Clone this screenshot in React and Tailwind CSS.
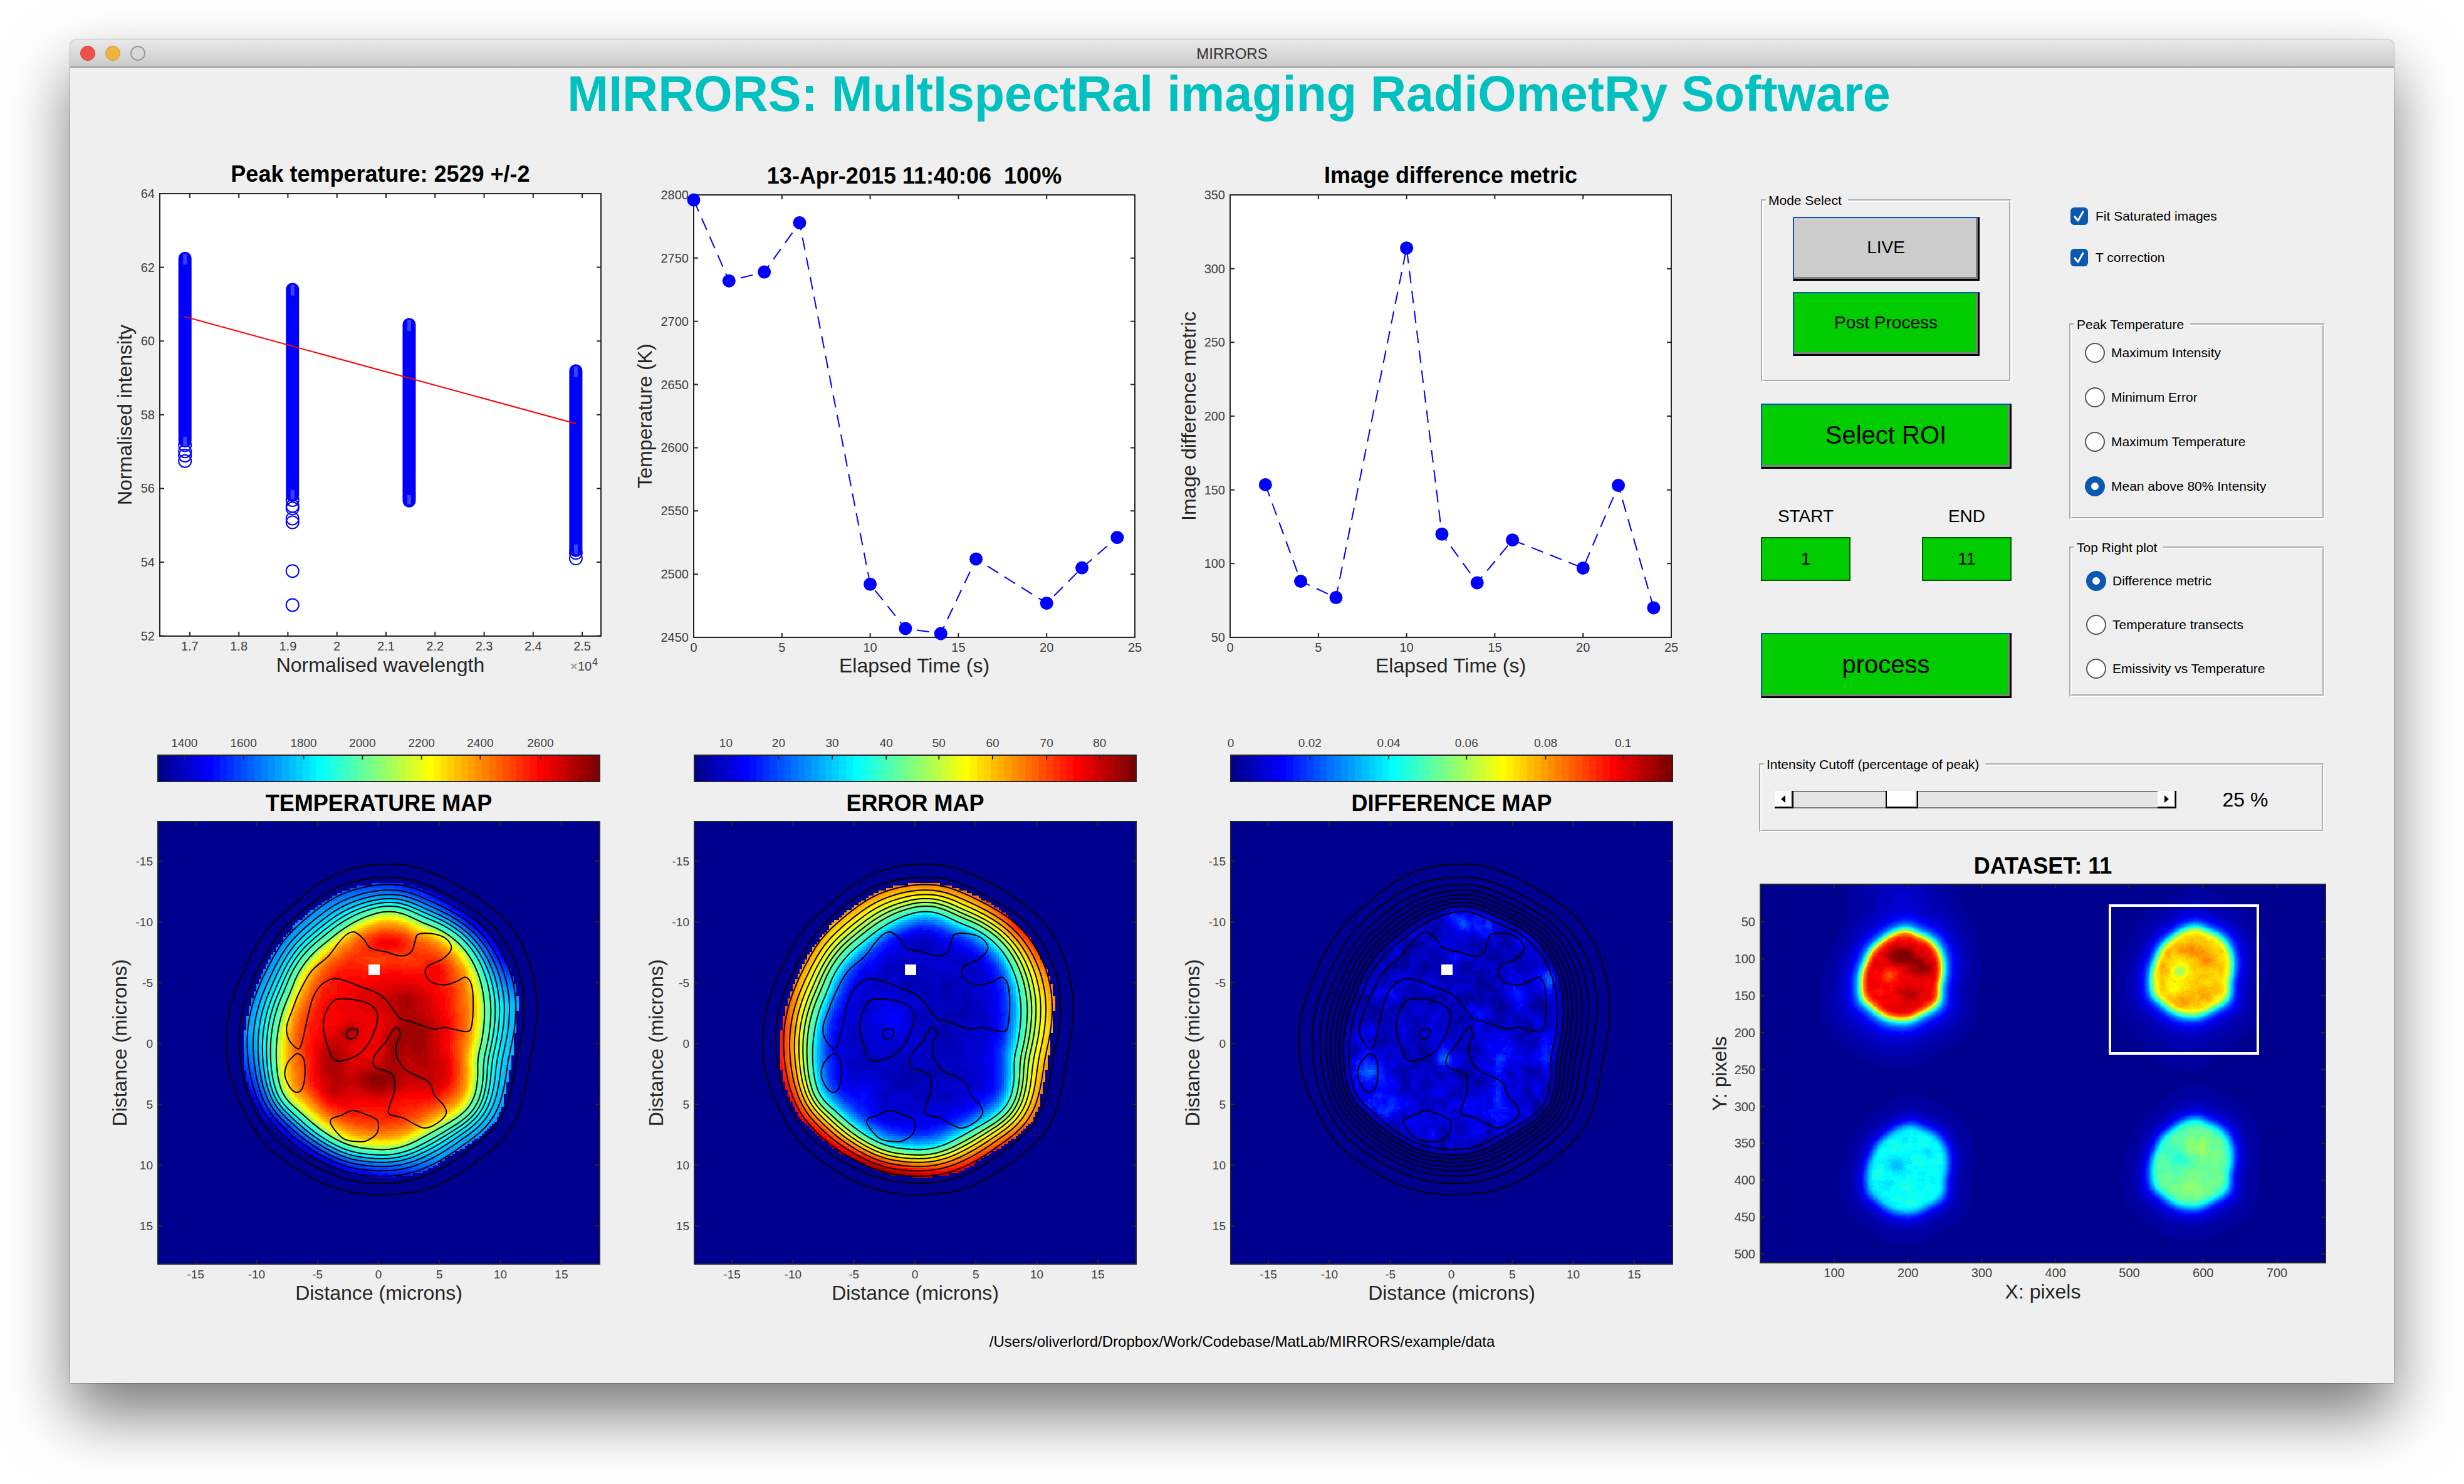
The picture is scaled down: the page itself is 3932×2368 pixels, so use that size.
import React, { useMemo } from "react";

const clamp = (v, a = 0, b = 1) => Math.min(b, Math.max(a, v));
const jet = (i) => {
  const v = (i + 1) / 64;
  const c = (o) => Math.round(255 * clamp(1.5 - Math.abs(4 * v - o)));
  return `rgb(${c(3)},${c(2)},${c(1)})`;
};
const JET = Array.from({ length: 64 }, (_, i) => jet(i));

/* Digitised outlines of the hot spot, in a 1568 unit frame */
const U = 0.5421;
const V = 0.6059;
const toMap = ([u, v]) => [(u - 189) * U, (v - 265) * V];
const RAW_OUTER = [[880,377],[950,384],[1000,402],[1100,448],[1160,484],[1220,530],[1262,590],[1290,660],[1304,740],[1300,810],[1280,900],[1272,960],[1258,1010],[1240,1060],[1205,1100],[1150,1145],[1085,1185],[1020,1220],[950,1240],[880,1246],[800,1246],[730,1235],[660,1212],[600,1180],[540,1143],[490,1100],[450,1040],[415,970],[397,920],[390,860],[393,800],[410,730],[440,665],[480,590],[520,540],[590,485],[640,442],[700,410],[760,388],[820,379]];
const RAW_SECOND = [[880,412],[940,418],[1000,440],[1080,478],[1140,510],[1195,560],[1235,620],[1258,680],[1267,740],[1262,810],[1245,880],[1235,940],[1220,1000],[1200,1045],[1160,1090],[1100,1130],[1040,1170],[980,1197],[920,1213],[860,1217],[790,1215],[720,1200],[650,1172],[590,1140],[530,1095],[490,1050],[455,985],[435,910],[429,860],[431,800],[445,740],[470,680],[505,620],[545,560],[590,520],[650,475],[710,440],[780,420],[830,413]];
const RAW_MASK = [[880,427],[950,437],[1050,475],[1120,520],[1175,570],[1215,635],[1240,690],[1250,735],[1240,800],[1230,890],[1215,960],[1200,1030],[1160,1080],[1090,1120],[1030,1155],[980,1185],[900,1200],[800,1197],[740,1190],[680,1165],[600,1125],[540,1080],[490,1035],[460,970],[443,910],[445,820],[465,740],[500,660],[550,585],[600,530],[660,490],[730,450],[800,432]];
const RAW_INNER = [[870,500],[920,510],[960,530],[1030,555],[1080,590],[1110,625],[1135,675],[1148,730],[1148,800],[1140,850],[1128,890],[1128,960],[1115,1005],[1085,1035],[1030,1065],[980,1090],[920,1118],[870,1129],[820,1127],[760,1120],[710,1100],[660,1070],[610,1030],[560,990],[545,950],[538,890],[541,830],[555,770],[580,715],[605,660],[640,618],[690,580],[740,545],[790,520],[830,507]];
const RAW_ISLANDS = [
  [[768,556],[795,575],[815,598],[860,608],[905,619],[935,608],[946,580],[955,562],[995,560],[1035,572],[1053,598],[1030,625],[985,645],[976,665],[995,688],[1035,695],[1070,685],[1095,675],[1112,695],[1117,740],[1113,800],[1100,818],[1060,812],[1035,807],[1000,811],[960,800],[930,790],[905,785],[885,765],[860,735],[830,715],[780,698],[740,684],[705,679],[670,695],[645,730],[630,780],[612,850],[600,863],[575,840],[568,805],[585,760],[605,715],[640,660],[690,620],[720,585],[745,562]],
  [[600,876],[618,890],[622,930],[615,965],[600,978],[580,968],[563,935],[568,905],[585,885]],
  [[720,732],[790,738],[825,755],[836,780],[825,820],[800,860],[770,883],[715,895],[690,860],[676,800],[690,755]],
  [[755,811],[775,813],[775,828],[760,837],[747,834],[744,822]],
  [[888,807],[903,825],[892,850],[893,885],[920,920],[985,950],[1003,985],[1030,1012],[1037,1035],[1010,1060],[975,1072],[945,1062],[910,1045],[870,1035],[872,1010],[885,975],[882,935],[860,922],[826,910],[828,880],[860,845]],
  [[762,1026],[800,1036],[835,1052],[834,1085],[805,1105],[780,1108],[735,1100],[700,1065],[700,1048],[730,1038]],
];

const CENTER = toMap([845, 815]);
const N = 360;
const polar = (raw) => {
  const pts = raw
    .map(toMap)
    .map(([x, y]) => [Math.atan2(y - CENTER[1], x - CENTER[0]), Math.hypot(x - CENTER[0], y - CENTER[1])])
    .sort((a, b) => a[0] - b[0]);
  const ext = [
    [pts[pts.length - 1][0] - 2 * Math.PI, pts[pts.length - 1][1]],
    ...pts,
    [pts[0][0] + 2 * Math.PI, pts[0][1]],
  ];
  const base = Array.from({ length: N }, (_, k) => {
    const a = -Math.PI + (k * 2 * Math.PI) / N;
    let j = 0;
    while (j < ext.length - 2 && ext[j + 1][0] < a) j += 1;
    const t = (a - ext[j][0]) / (ext[j + 1][0] - ext[j][0]);
    return ext[j][1] + t * (ext[j + 1][1] - ext[j][1]);
  });
  return base.map((_, k) => {
    let s = 0;
    for (let d = -5; d <= 5; d += 1) s += base[(k + d + N) % N];
    return s / 11;
  });
};
const OUTER = polar(RAW_OUTER);
const SECOND = polar(RAW_SECOND);
const MASK = polar(RAW_MASK);
const INNER = polar(RAW_INNER);
const at = (arr, a) => {
  const f = ((a + Math.PI) / (2 * Math.PI)) * N;
  const i = Math.floor(f);
  const t = f - i;
  return arr[((i % N) + N) % N] * (1 - t) + arr[(i + 1) % N] * t;
};
const ringPath = (arr) =>
  arr
    .map((r, k) => {
      const a = -Math.PI + (k * 2 * Math.PI) / N;
      return `${k ? "L" : "M"}${(CENTER[0] + r * Math.cos(a)).toFixed(1)} ${(CENTER[1] + r * Math.sin(a)).toFixed(1)}`;
    })
    .join("") + "Z";
const smoothPath = (raw) => {
  const p = raw.map(toMap);
  const n = p.length;
  let d = `M${p[0][0].toFixed(1)} ${p[0][1].toFixed(1)}`;
  for (let i = 0; i < n; i += 1) {
    const [a, b, c, e] = [p[(i - 1 + n) % n], p[i], p[(i + 1) % n], p[(i + 2) % n]];
    const q = [b[0] + (c[0] - a[0]) / 6, b[1] + (c[1] - a[1]) / 6, c[0] - (e[0] - b[0]) / 6, c[1] - (e[1] - b[1]) / 6, c[0], c[1]];
    d += `C${q.map((z) => z.toFixed(1)).join(" ")}`;
  }
  return `${d}Z`;
};
const CONTOURS = [
  ringPath(OUTER),
  ringPath(SECOND),
  ...[0.21, 0.37, 0.5, 0.62, 0.73, 0.84, 1].map((t) => ringPath(SECOND.map((r, k) => r + (INNER[k] - r) * t))),
  ...RAW_ISLANDS.map(smoothPath),
].join("");

/* Smooth deterministic noise */
const hash = (x, y) => {
  let h = Math.imul(x, 374761393) + Math.imul(y, 668265263);
  h = Math.imul(h ^ (h >>> 13), 1274126177);
  return ((h ^ (h >>> 16)) >>> 0) / 4294967295;
};
const noise = (x, y) => {
  const [i, j] = [Math.floor(x), Math.floor(y)];
  const [fx, fy] = [x - i, y - j];
  const [sx, sy] = [fx * fx * (3 - 2 * fx), fy * fy * (3 - 2 * fy)];
  const top = hash(i, j) * (1 - sx) + hash(i + 1, j) * sx;
  const bottom = hash(i, j + 1) * (1 - sx) + hash(i + 1, j + 1) * sx;
  return top * (1 - sy) + bottom * sy;
};
const lerpTable = (table, x) => {
  if (x <= table[0][0]) return table[0][1];
  for (let i = 1; i < table.length; i += 1) {
    if (x <= table[i][0]) {
      const [a, b] = [table[i - 1], table[i]];
      return a[1] + ((x - a[0]) / (b[0] - a[0])) * (b[1] - a[1]);
    }
  }
  return table[table.length - 1][1];
};
const blobs = (list, u, v) =>
  list.reduce((s, [cu, cv, su, sv, amp]) => s + amp * Math.exp(-(((u - cu) / su) ** 2) - ((v - cv) / sv) ** 2), 0);

/* Run-length encode a scalar field into one path for each colour level */
const rasterise = (cols, rows, field) => {
  const parts = Array.from({ length: 64 }, () => []);
  for (let j = 0; j < rows; j += 1) {
    let start = 0;
    let prev = -1;
    for (let i = 0; i <= cols; i += 1) {
      const level = i < cols ? clamp(Math.floor(field(i, j) * 64), 0, 63) : -2;
      if (level !== prev) {
        if (prev > 0) parts[prev].push(`M${start} ${j}h${i - start}v1h${start - i}z`);
        start = i;
        prev = level;
      }
    }
  }
  return parts.map((p) => p.join(""));
};

/* angle in degrees (clockwise from the right) -> value on the rim */
const TEMP_EDGE = [[-180,0.27],[-150,0.25],[-120,0.25],[-95,0.18],[-75,0.13],[-50,0.07],[-30,0.11],[-12,0.28],[10,0.3],[40,0.27],[65,0.25],[80,0.14],[110,0.07],[140,0.07],[160,0.15],[180,0.27]];
const ERR_EDGE = [[-180,0.84],[-160,0.74],[-130,0.7],[-90,0.75],[-65,0.76],[-45,0.86],[-25,0.76],[0,0.68],[30,0.74],[60,0.84],[85,0.94],[105,1],[130,0.9],[160,0.86],[180,0.84]];
const TEMP_BLOBS = [[870,575,60,30,0.06],[870,628,110,30,-0.05],[930,820,70,70,0.08],[830,950,70,40,0.11],[700,890,60,60,0.08],[755,820,30,25,0.07],[1010,655,40,30,0.03],[920,730,80,40,0.06],[600,915,40,60,-0.05],[1085,730,40,90,-0.04],[990,920,90,70,0.07],[760,740,70,50,0.03],[700,985,50,50,0.07],[880,880,30,60,0.05],[1000,810,60,60,0.03]];
const ERR_BLOBS = [[770,790,60,60,0.07],[840,570,80,30,-0.04],[690,980,30,40,0.04],[590,920,30,50,0.04],[1030,640,50,40,-0.02]];
const DIFF_BLOBS = [[900,530,70,40,0.12],[1135,680,30,40,0.13],[1070,575,40,30,0.07],[655,715,35,25,0.09],[600,920,40,50,0.13],[630,1010,50,35,0.11],[820,885,30,35,0.15],[985,885,45,40,0.09],[1115,860,35,45,0.1],[590,820,30,30,0.07],[780,1060,60,30,0.06],[1000,1050,60,40,0.05],[925,770,40,20,0.06],[970,980,30,50,0.07],[900,1010,60,30,0.05],[1040,720,40,30,0.06],[850,620,40,15,0.05],[700,1000,50,60,0.04]];

const CELLS = 180;
const mapField = (kind) => (i, j) => {
  const x = ((i + 0.5) / CELLS) * 705;
  const y = ((j + 0.5) / CELLS) * 706;
  const a = Math.atan2(y - CENTER[1], x - CENTER[0]);
  const r = Math.hypot(x - CENTER[0], y - CENTER[1]);
  const m = at(MASK, a);
  if (r > m) return 0;
  const n = at(INNER, a);
  const deg = (a * 180) / Math.PI;
  const u = x / U + 189;
  const v = y / V + 265;
  const s = (m - r) / (m - n);
  const inside = clamp((n - r) / 60);
  if (kind === "temp") {
    const e = lerpTable(TEMP_EDGE, deg);
    const low = e + (0.48 - e) * clamp(s) ** 1.35;
    const d = Math.max(0, n - r);
    const rise = lerpTable([[0, 0],[8, 0.12],[18, 0.22],[32, 0.3],[50, 0.36],[90, 0.385],[140, 0.39]], d);
    return low + rise + inside * (blobs(TEMP_BLOBS, u, v) + 0.02 * (noise(u / 40, v / 40) - 0.5));
  }
  if (kind === "error") {
    const e = lerpTable(ERR_EDGE, deg);
    const low = e + (0.4 - e) * clamp(s) ** 1.2;
    const d = Math.max(0, n - r);
    const drop = lerpTable([[0, 0],[10, 0.12],[24, 0.24],[40, 0.3],[60, 0.33],[110, 0.35]], d);
    return Math.max(0.02, low - drop + inside * (blobs(ERR_BLOBS, u, v) + 0.03 * (noise(u / 30, v / 30) - 0.5)));
  }
  const fade = clamp((n - r + 14) / 16);
  const grain = 0.08 * noise(u / 28, v / 28) + 0.05 * noise(u / 12 + 50, v / 12) + 0.02 * hash(i, j);
  return fade * clamp(grain - 0.02 + blobs(DIFF_BLOBS, u, v), 0.01, 0.26);
};

const SPOTS = [
  { c: [499, 640], amp: 0.88, list: [[500,588,35,25,0.12],[545,620,25,25,0.1],[470,640,18,20,-0.1],[520,690,25,20,0.06],[500,540,40,20,-0.02],[440,690,30,40,-0.02]] },
  { c: [1190, 630], amp: 0.66, list: [[1190,573,35,18,0.08],[1228,600,20,20,0.07],[1163,630,18,18,-0.14],[1120,600,20,40,0.03],[1215,690,20,20,0.05],[1165,715,25,20,0.05],[1145,670,15,20,-0.05]] },
  { c: [512, 1168], amp: 0.375, list: [[488,1160,20,25,-0.08],[515,1085,20,15,-0.03],[560,1115,15,15,-0.03],[548,1190,20,20,-0.03],[470,1220,15,20,-0.03],[530,1250,40,20,0.02],[560,1080,30,20,0.02]] },
  { c: [1190, 1152], amp: 0.46, list: [[1205,1105,35,30,0.05],[1165,1140,25,25,-0.06],[1130,1110,20,30,-0.03],[1190,1215,40,30,0.05],[1240,1160,30,40,0.02]] },
];
const PROFILE = [[0,1],[0.8,1],[0.9,0.96],[0.98,0.84],[1.06,0.6],[1.14,0.38],[1.22,0.24],[1.34,0.14],[1.5,0.075],[1.8,0.035],[2.2,0.01],[2.6,0]];
const DCOLS = 451;
const DROWS = 302;
const SCALE_X = 0.36;
const SCALE_Y = 0.345;
const BOX = toMap([843, 814]);
const dataField = (i, j) => {
  const x = (i + 0.5) * 2;
  const y = (j + 0.5) * 2;
  const u = x / 0.6696 + 162;
  const v = y / 0.5867 + 393;
  let total = 0;
  for (const spot of SPOTS) {
    const dx = ((u - spot.c[0]) * 0.6696) / SCALE_X + BOX[0] - CENTER[0];
    const dy = ((v - spot.c[1]) * 0.5867) / SCALE_Y + BOX[1] - CENTER[1];
    const a = Math.atan2(dy, dx);
    const q = (Math.hypot(dx, dy) / at(INNER, a)) * 0.97;
    if (q > 2.6) continue;
    const p = lerpTable(PROFILE, q);
    const inner = clamp((1 - q) / 0.12);
    total += spot.amp * p;
    total += inner * (blobs(spot.list, u, v) + 0.04 * (noise(u / 14, v / 14) - 0.5) + 0.02 * (hash(i, j) - 0.5));
  }
  total += blobs([[490, 380, 120, 90, 0.05], [430, 800, 130, 100, 0.012], [1150, 860, 120, 60, 0.012]], u, v);
  return total;
};

function Heat({ x, y, width, height, cols, rows, field }) {
  const levels = useMemo(() => rasterise(cols, rows, field), [cols, rows, field]);
  return (
    <g>
      <rect x={x} y={y} width={width} height={height} fill={JET[0]} />
      <g transform={`translate(${x} ${y}) scale(${width / cols} ${height / rows})`} shapeRendering="crispEdges">
        {levels.map((d, i) => d && <path key={i} d={d} fill={JET[i]} />)}
      </g>
    </g>
  );
}

/* Axes box with inward ticks, tick labels, title and axis names.
   xt / yt: arrays of [position, label]. */
function Axes({ x, y, w, h, xt, yt, xl, yl, yx, title, titleY, labelY, tick = "text-[20px]", len = 7 }) {
  return (
    <g>
      <rect x={x} y={y} width={w} height={h} fill="none" stroke="#262626" strokeWidth="2" />
      <g stroke="#262626" strokeWidth="2">
        {xt.map(([p, t]) => (
          <path key={t} d={`M${p} ${y}v${len}M${p} ${y + h}v${-len}`} />
        ))}
        {yt.map(([p, t]) => (
          <path key={t} d={`M${x} ${p}h${len}M${x + w} ${p}h${-len}`} />
        ))}
      </g>
      <g className={`${tick} fill-[#404040]`}>
        {xt.map(([p, t]) => (
          <text key={t} x={p} y={y + h + 23} textAnchor="middle">{t}</text>
        ))}
        {yt.map(([p, t]) => (
          <text key={t} x={x - 8} y={p + 7} textAnchor="end">{t}</text>
        ))}
      </g>
      <g className="text-[32px] fill-[#262626]">
        <text x={x + w / 2} y={labelY} textAnchor="middle">{xl}</text>
        <text transform={`translate(${yx} ${y + h / 2}) rotate(-90)`} textAnchor="middle">{yl}</text>
      </g>
      <text x={x + w / 2} y={titleY} textAnchor="middle" className="text-[36px] font-bold fill-black whitespace-pre">{title}</text>
    </g>
  );
}

const C1X = (u) => 103 + (u - 243) / 1.568;
const C1Y = (v) => 69 + (v - 386) / 1.493;
const COLUMNS = [
  { x: 306, top: 540, end: 975, rings: [985, 1000, 1010, 1023], tail: 965 },
  { x: 575, top: 614, end: 1105, rings: [1116, 1130, 1136, 1160, 1169, 1285, 1366], tail: 1092 },
  { x: 867, top: 698, end: 1118, rings: [], tail: 1104 },
  { x: 1284, top: 808, end: 1236, rings: [1242, 1255], tail: 1222 },
];

function FitPlot() {
  const x = 103;
  const xt = ["1.7", "1.8", "1.9", "2", "2.1", "2.2", "2.3", "2.4", "2.5"].map((t, i) => [C1X(318 + i * 122.75), t]);
  const yt = [64, 62, 60, 58, 56, 54, 52].map((t, i) => [69 + i * 117.6, t]);
  return (
    <svg viewBox="0 0 856 900" className="block w-full h-auto" role="img" aria-label="Normalised intensity against wavelength">
      <rect x={x} y="69" width="704" height="706" fill="#fff" />
      <Axes x={x} y={69} w={704} h={706} xt={xt} yt={yt} xl="Normalised wavelength" yl="Normalised intensity" yx={58} title="Peak temperature: 2529 +/-2" titleY={50} labelY={832} />
      <g className="fill-[#404040]">
        <text x="758" y="830" className="text-[20px] fill-[#808080]">×</text>
        <text x="770" y="830" className="text-[20px]">10</text>
        <text x="793" y="822" className="text-[16px]">4</text>
      </g>
      {COLUMNS.map((c) => (
        <g key={c.x}>
          <path d={`M${C1X(c.x)} ${C1Y(c.top)}V${C1Y(c.end)}`} stroke="#00f" strokeWidth="21" strokeLinecap="round" />
          {c.rings.map((v) => (
            <circle key={v} cx={C1X(c.x)} cy={C1Y(v)} r="10" fill="none" stroke="#00f" strokeWidth="2" />
          ))}
          <rect x={C1X(c.x) - 3} y={C1Y(c.top) - 7} width="6" height="17" fill="#4040ff" />
          <rect x={C1X(c.x) - 3} y={C1Y(c.tail)} width="6" height="15" fill="#4040ff" />
        </g>
      ))}
      <path d={`M${C1X(305)} ${C1Y(679)}L${C1X(1284)} ${C1Y(934)}`} stroke="#f00" strokeWidth="2" />
    </svg>
  );
}

function TimePlot({ data, min, max, step, title, titleY, yl, yx }) {
  const [x, y, w, h] = [99, 71, 704, 706];
  const px = (t) => x + (t / 25) * w;
  const py = (v) => y + ((max - v) / (max - min)) * h;
  const xt = [0, 5, 10, 15, 20, 25].map((t) => [px(t), t]);
  const yt = [];
  for (let v = min; v <= max; v += step) yt.push([py(v), v]);
  return (
    <svg viewBox="0 0 856 900" className="block w-full h-auto" role="img" aria-label={title}>
      <rect x={x} y={y} width={w} height={h} fill="#fff" />
      <Axes x={x} y={y} w={w} h={h} xt={xt} yt={yt} xl="Elapsed Time (s)" yl={yl} yx={yx} title={title} titleY={titleY} labelY={833} />
      <polyline points={data.map(([t, v]) => `${px(t)},${py(v)}`).join(" ")} fill="none" stroke="#00f" strokeWidth="2" strokeDasharray="20 12" />
      {data.map(([t, v]) => (
        <circle key={t} cx={px(t)} cy={py(v)} r="10.5" fill="#00f" />
      ))}
    </svg>
  );
}

const TEMPS = [[0,2796],[2,2732],[4,2739],[6,2778],[10,2492],[12,2457],[14,2453],[16,2512],[20,2477],[22,2505],[24,2529]];
const DIFFS = [[2,153.5],[4,88],[6,77],[10,314],[12,120],[14,87],[16,116],[20,97],[22,153],[24,70]];

const FIELDS = { temp: mapField("temp"), error: mapField("error"), diff: mapField("diff") };

function MapPlot({ kind, title, bar }) {
  const x = 100;
  const y = 171;
  const xt = [-15, -10, -5, 0, 5, 10, 15].map((t) => [x + 352 + t * 19.46, t]);
  const yt = [-15, -10, -5, 0, 5, 10, 15].map((t) => [y + 354 + t * 19.4, t]);
  return (
    <svg viewBox="0 0 856 940" className="block w-full h-auto" role="img" aria-label={title}>
      {JET.map((c, i) => (
        <rect key={c} x={x + i * 11} y="65" width={i === 63 ? 12 : 11} height="42" fill={c} shapeRendering="crispEdges" />
      ))}
      <rect x={x} y="65" width="705" height="42" fill="none" stroke="#262626" strokeWidth="2" />
      {bar.map(([u, t]) => (
        <g key={t}>
          <path d={`M${x + u * U} 65v7`} stroke="#262626" strokeWidth="2" />
          <text x={x + u * U} y="52" textAnchor="middle" className="text-[19px] fill-[#404040]">{t}</text>
        </g>
      ))}
      <Heat x={x} y={y} width={705} height={706} cols={CELLS} rows={CELLS} field={FIELDS[kind]} />
      <path d={CONTOURS} transform={`translate(${x} ${y})`} fill="none" stroke="#000" strokeWidth="2" />
      <rect x={x + 336} y={y + 228} width="18" height="17" fill="#fff" />
      <Axes x={x} y={y} w={705} h={706} xt={xt} yt={yt} xl="Distance (microns)" yl="Distance (microns)" yx={50} title={title} titleY={154} labelY={934} tick="text-[19px]" />
    </svg>
  );
}

function DatasetPlot() {
  const [x, y, w, h] = [89, 71, 902, 604];
  const xt = [100, 200, 300, 400, 500, 600, 700].map((t) => [x + 118 + (t - 100) * 1.1775, t]);
  const yt = [50, 100, 150, 200, 250, 300, 350, 400, 450, 500].map((t) => [y + 60 + (t - 50) * 1.178, t]);
  return (
    <svg viewBox="0 0 1060 740" className="block w-full h-auto" role="img" aria-label="Dataset 11">
      <Heat x={x} y={y} width={w} height={h} cols={DCOLS} rows={DROWS} field={dataField} />
      <rect x="647" y="105" width="236" height="236" fill="none" stroke="#fff" strokeWidth="4" />
      <Axes x={x} y={y} w={w} h={h} xt={xt} yt={yt} xl="X: pixels" yl="Y: pixels" yx={35} title="DATASET: 11" titleY={54} labelY={732} />
    </svg>
  );
}

function Group({ legend, className, children }) {
  return (
    <fieldset className={`min-w-0 border-4 border-white [border-style:groove] ${className}`}>
      <legend className="ml-1 h-6 pl-1 pr-2.5 text-[21px] leading-6">{legend}</legend>
      {children}
    </fieldset>
  );
}

const bevel = "pb-1 border-t-2 border-l-2 border-r-3 border-b-3 border-t-[#0a50c8] border-l-[#0a50c8] border-r-black border-b-black shadow-[inset_-3px_-3px_0_#808080]";

function Check({ id, label }) {
  return (
    <div className="flex h-8 items-center gap-3 pl-0.5">
      <span className="relative block size-7">
        <input id={id} type="checkbox" defaultChecked className="block size-7 appearance-none rounded-md bg-[#0a58b0]" />
        <svg viewBox="0 0 28 28" className="pointer-events-none absolute inset-0 size-7" aria-hidden="true">
          <path d="M7 15l5 6L20 7" fill="none" stroke="#fff" strokeWidth="3" strokeLinecap="round" strokeLinejoin="round" />
        </svg>
      </span>
      <label htmlFor={id} className="text-[21px] leading-8">{label}</label>
    </div>
  );
}

function Radio({ name, label, checked }) {
  const id = `${name}-${label.replace(/\W+/g, "-")}`;
  return (
    <div className="flex h-8 items-center gap-2.5">
      <input
        id={id}
        type="radio"
        name={name}
        defaultChecked={checked}
        className="size-8 appearance-none rounded-full border-2 border-[#555] bg-white checked:border-[10px] checked:border-[#0a58b0]"
      />
      <label htmlFor={id} className="text-[21px] leading-8">{label}</label>
    </div>
  );
}

function Bound({ id, label, value }) {
  return (
    <div className="flex w-[143px] flex-col gap-[13px]">
      <label htmlFor={id} className="h-10 text-center text-[28px] leading-10">{label}</label>
      <input id={id} defaultValue={value} className="h-[70px] w-full border-2 border-[#005a00] bg-[#00cc00] text-center text-[28px]" />
    </div>
  );
}

function Arrow({ label, d }) {
  return (
    <button type="button" aria-label={label} className="flex h-7 w-[30px] items-center justify-center border-b-2 border-r-2 border-black bg-white shadow-[inset_-2px_-2px_0_#a0a0a0]">
      <svg viewBox="0 0 10 12" className="h-3 w-2.5" aria-hidden="true"><path d={d} /></svg>
    </button>
  );
}

function Controls() {
  return (
    <div className="grid grid-cols-[400fr_408fr] gap-x-[92px] pl-[90px] pr-[70px]">
      <div className="flex flex-col pt-[68px]">
        <Group legend="Mode Select" className="pb-[38px]">
          <div className="flex flex-col items-center gap-[18px] pt-[14px]">
            <button type="button" className={`h-[102px] w-19/25 bg-[#cccccc] text-[28px] ${bevel}`}>LIVE</button>
            <button type="button" className={`h-[102px] w-19/25 bg-[#00cc00] text-[28px] ${bevel}`}>Post Process</button>
          </div>
        </Group>
        <button type="button" className={`mt-[34px] h-[104px] bg-[#00cc00] text-[40px] ${bevel}`}>Select ROI</button>
        <div className="mt-14 flex justify-between">
          <Bound id="start" label="START" value="1" />
          <Bound id="end" label="END" value="11" />
        </div>
        <button type="button" className={`mt-[83px] h-[104px] bg-[#00cc00] text-[40px] ${bevel}`}>process</button>
      </div>
      <div className="flex flex-col pt-[89px]">
        <div className="flex flex-col gap-[34px]">
          <Check id="saturated" label="Fit Saturated images" />
          <Check id="correction" label="T correction" />
        </div>
        <Group legend="Peak Temperature" className="mt-[79px] pb-[33px]">
          <div className="flex flex-col gap-[39px] pl-[21px] pt-[17px]">
            <Radio name="peak" label="Maximum Intensity" />
            <Radio name="peak" label="Minimum Error" />
            <Radio name="peak" label="Maximum Temperature" />
            <Radio name="peak" label="Mean above 80% Intensity" checked />
          </div>
        </Group>
        <Group legend="Top Right plot" className="mt-[33px] pb-[25px]">
          <div className="flex flex-col gap-[38px] pl-[23px] pt-[25px]">
            <Radio name="plot" label="Difference metric" checked />
            <Radio name="plot" label="Temperature transects" />
            <Radio name="plot" label="Emissivity vs Temperature" />
          </div>
        </Group>
      </div>
    </div>
  );
}

function Cutoff() {
  return (
    <div className="mt-[94px] pl-[87px] pr-[71px]">
      <Group legend="Intensity Cutoff (percentage of peak)" className="pb-7">
        <div className="flex h-16 items-end pl-[21px] pr-3">
          <div className="flex h-10 flex-1 items-center">
            <Arrow label="Decrease cutoff" d="M8 0v12L1 6z" />
            <input
              type="range"
              aria-label="Intensity cutoff"
              min="0"
              max="90"
              defaultValue="25"
              className="h-7 min-w-0 flex-1 appearance-none border-y-2 border-[#808080] bg-[#e5e5e5] [&::-webkit-slider-thumb]:h-7 [&::-webkit-slider-thumb]:w-[52px] [&::-webkit-slider-thumb]:appearance-none [&::-webkit-slider-thumb]:border-2 [&::-webkit-slider-thumb]:border-t-0 [&::-webkit-slider-thumb]:border-black [&::-webkit-slider-thumb]:bg-white [&::-webkit-slider-thumb]:shadow-[inset_-2px_-2px_0_#a0a0a0]"
            />
            <Arrow label="Increase cutoff" d="M2 0v12l7-6z" />
          </div>
          <output className="w-[220px] text-center text-[32px] leading-10">25 %</output>
        </div>
      </Group>
    </div>
  );
}

export default function App() {
  return (
    <div className="bg-white px-28 pt-[63px] pb-40 font-['Liberation_Sans',Arial,sans-serif] text-black">
      <main className="rounded-t-[10px] bg-[#efefef] shadow-[0_50px_100px_rgba(0,0,0,0.53),0_0_2px_rgba(0,0,0,0.7)]">
        <header className="grid h-[45px] grid-cols-[1fr_auto_1fr] items-center rounded-t-[10px] border-b-2 border-[#9a9a9a] bg-linear-to-b from-[#e9e9e9] to-[#cbcbcb] px-4">
          <div className="flex gap-4">
            <span className="size-6 rounded-full border border-[#d1413a] bg-[#ed5149]" />
            <span className="size-6 rounded-full border border-[#cf9a30] bg-[#eeb33f]" />
            <span className="size-6 rounded-full border-2 border-[#9b9b9b] bg-[#d9d9d9]" />
          </div>
          <span className="pt-0.5 text-[24px] leading-8 text-[#333]">MIRRORS</span>
        </header>
        <h1 className="pr-2.5 text-center text-[79px] font-bold leading-[84px] text-[#00c0c0]">MIRRORS: MultIspectRal imaging RadiOmetRy Software</h1>
        <div className="mt-12 grid grid-cols-[856fr_856fr_856fr_1060fr] px-10">
          <div>
            <FitPlot />
            <MapPlot kind="temp" title="TEMPERATURE MAP" bar={[[78,1400],[252,1600],[429,1800],[602,2000],[776,2200],[949,2400],[1126,2600]]} />
          </div>
          <div>
            <TimePlot data={TEMPS} min={2450} max={2800} step={50} title={"13-Apr-2015 11:40:06\u00a0 100%"} titleY={53} yl="Temperature (K)" yx={32} />
            <MapPlot kind="error" title="ERROR MAP" bar={[[93,10],[248,20],[406,30],[565,40],[720,50],[878,60],[1037,70],[1193,80]]} />
          </div>
          <div>
            <TimePlot data={DIFFS} min={50} max={350} step={50} title="Image difference metric" titleY={52} yl="Image difference metric" yx={44} />
            <MapPlot kind="diff" title="DIFFERENCE MAP" bar={[[0,"0"],[233,"0.02"],[465,"0.04"],[694,"0.06"],[927,"0.08"],[1155,"0.1"]]} />
          </div>
          <div className="flex flex-col justify-between">
            <div>
              <Controls />
              <Cutoff />
            </div>
            <DatasetPlot />
          </div>
        </div>
        <p className="mt-[45px] pb-[50px] pl-8 text-center text-[24px] leading-8">/Users/oliverlord/Dropbox/Work/Codebase/MatLab/MIRRORS/example/data</p>
      </main>
    </div>
  );
}
